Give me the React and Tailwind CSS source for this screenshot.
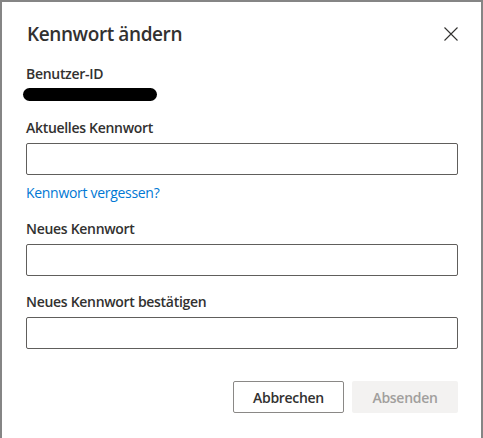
function Field({ label, className = '' }) {
  return (
    <div className={className}>
      <label className="block text-[14px] leading-[20px] font-semibold tracking-[-0.3px] text-[#323130]">{label}</label>
      <input type="password" className="mt-[5px] block w-full h-[32px] rounded-[2px] border border-[#605e5c] bg-white px-2 outline-none" />
    </div>
  )
}

export default function App() {
  return (
    <div className="w-[483px] h-[438px] bg-white border-l-2 border-t-2 border-r-2 border-[#858585] font-['Open_Sans',sans-serif] text-[#323130] overflow-hidden">
      <div className="flex items-start justify-between pl-[25px] pr-[23px] pt-[18px]">
        <h1 className="text-[19px] leading-[28px] font-semibold tracking-[-0.4px]">Kennwort ändern</h1>
        <button className="mt-[7px] text-[#323130]">
          <svg width="14" height="14" viewBox="0 0 14 14" fill="none" stroke="currentColor" strokeWidth="1.1">
            <path d="M0.5 0.5 L13.5 13.5 M13.5 0.5 L0.5 13.5" />
          </svg>
        </button>
      </div>

      <div className="pl-[24px] pr-[23px]">
        <div className="mt-[16px] text-[14px] leading-[20px] font-semibold tracking-[-0.3px]">Benutzer-ID</div>
        <div className="mt-[4px] ml-[-3px] h-[13px] w-[134px] rounded-full bg-black" />

        <Field label="Aktuelles Kennwort" className="mt-[17px]" />
        <a href="#" className="mt-[8px] block w-fit text-[14px] leading-[20px] tracking-[-0.3px] text-[#0078d4]">Kennwort vergessen?</a>

        <Field label="Neues Kennwort" className="mt-[16px]" />
        <Field label="Neues Kennwort bestätigen" className="mt-[16px]" />

        <div className="mt-[32px] flex justify-end gap-[8px]">
          <button className="h-[32px] w-[111px] rounded-[2px] border border-[#8a8886] bg-white text-[14px] font-semibold tracking-[-0.3px] text-[#323130]">Abbrechen</button>
          <button disabled className="h-[32px] w-[106px] rounded-[2px] bg-[#f3f2f1] text-[14px] font-semibold tracking-[-0.3px] text-[#a19f9d]">Absenden</button>
        </div>
      </div>
    </div>
  )
}
